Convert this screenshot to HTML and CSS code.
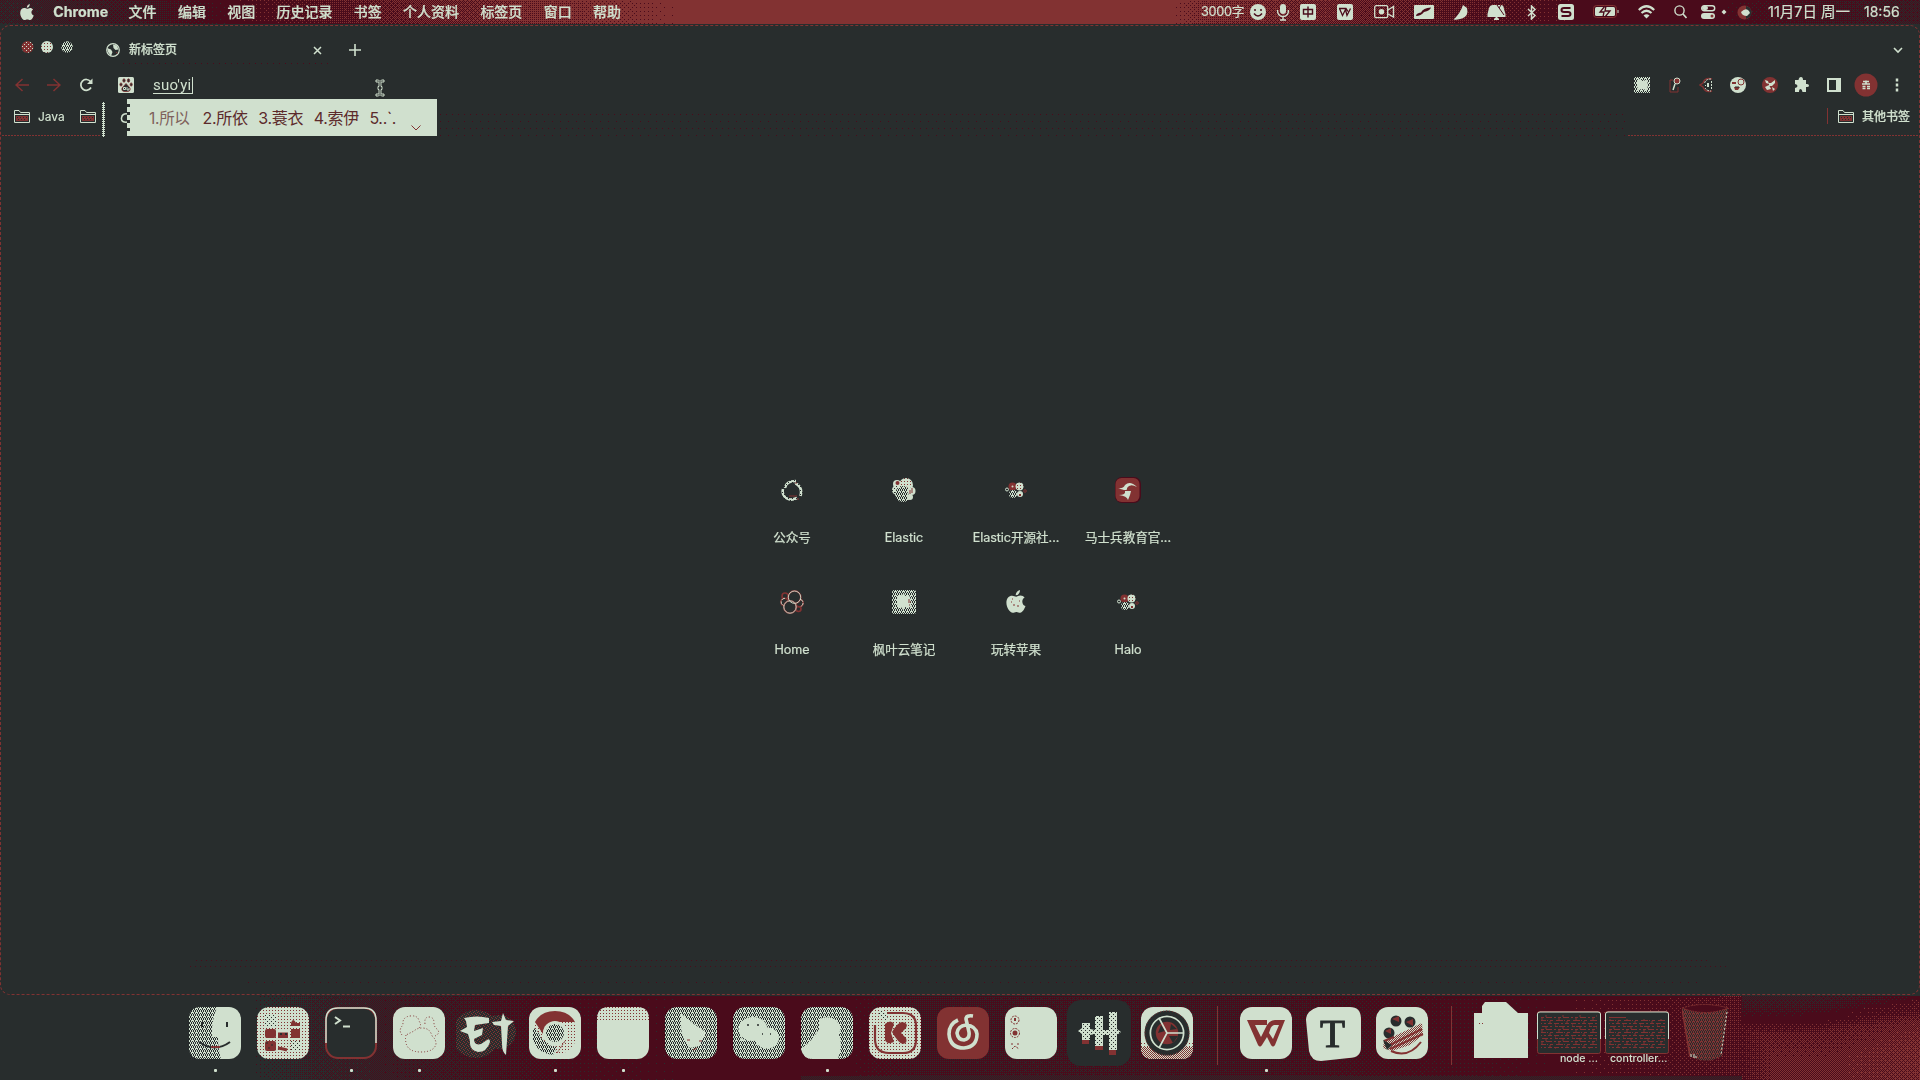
FILE: index.html
```html
<!DOCTYPE html>
<html lang="zh-CN">
<head>
<meta charset="utf-8">
<title>新标签页</title>
<link rel="stylesheet" href="styles.css">
</head>
<body>
<svg class="defs" width="0" height="0" aria-hidden="true">
  <defs>
    <pattern id="checker" width="4" height="4" patternUnits="userSpaceOnUse"><rect width="4" height="4" fill="#d0e0ce"/><path d="M0 0h1v1H0zM2 0h1v1H2zM1 1h1v1H1zM3 2h1v1H3zM1 2h1v1H1zM0 3h1v1H0zM2 3h1v1H2z" fill="#282d2d"/></pattern>
    <pattern id="dotsDark" width="4" height="4" patternUnits="userSpaceOnUse"><rect width="4" height="4" fill="#d0e0ce"/><path d="M0 0h1v1H0zM2 2h1v1H2z" fill="#282d2d"/></pattern>
    <pattern id="dotsRed" width="3" height="3" patternUnits="userSpaceOnUse"><rect width="3" height="3" fill="#d0e0ce"/><rect width="1" height="1" fill="#823232"/></pattern>
    <pattern id="redHalf" width="2" height="2" patternUnits="userSpaceOnUse"><rect width="2" height="2" fill="#d0e0ce"/><path d="M0 0h1v1H0zM1 1h1v1H1z" fill="#823232"/></pattern>
    <pattern id="redDark" width="4" height="4" patternUnits="userSpaceOnUse"><rect width="4" height="4" fill="#282d2d"/><path d="M0 0h1v1H0zM2 1h1v1H2zM1 2h1v1H1zM3 3h1v1H3z" fill="#823232"/></pattern>
    <pattern id="bin" width="4" height="4" patternUnits="userSpaceOnUse"><rect width="4" height="4" fill="#823232"/><path d="M0 0h1v1H0zM2 0h1v1H2zM1 1h1v1H1zM3 2h1v1H3zM1 2h1v1H1zM0 3h1v1H0zM2 3h1v1H2z" fill="#282d2d"/></pattern>
    <pattern id="redMost" width="4" height="4" patternUnits="userSpaceOnUse"><rect width="4" height="4" fill="#823232"/><path d="M0 0h1v1H0zM2 2h1v1H2z" fill="#d0e0ce"/></pattern>
    <pattern id="code" width="17" height="12" patternUnits="userSpaceOnUse"><path d="M0 .5h5M7 .5h2M11 .5h4M1 3.500h3M5 3.500h6M13 3.500h2M0 6.500h2M4 6.500h3M9 6.500h6M2 9.500h7M10 9.500h1M13 9.500h3M1 2h1M8 5h2M4 8h2M12 11h2" stroke="#823232"/></pattern>
    <symbol id="apple" viewBox="0 0 14 17"><path fill="currentColor" d="M9.800 0C9.900 2 8.400 3.900 6.800 3.800 6.700 2 8.200.3 9.800 0zM7.100 4.700c.8 0 1.700-.8 3-.8 1.300 0 2.300.6 3 1.500-2.500 1.600-2 5 .6 6-.7 2.200-2.200 4.700-3.700 4.700-1 0-1.500-.6-2.700-.6s-1.700.6-2.600.6C2.600 16.100.2 12.300.2 9c0-3.200 1.900-5 4-5 1.200 0 2.100.7 2.900.7z"/></symbol>
    <symbol id="folder" viewBox="0 0 16 14"><path d="M.5 13.500V1.500H5l1.500 2h9v10z" fill="#282d2d" stroke="#d0e0ce"/><path d="M1 5.500h14" stroke="#d0e0ce"/><path d="M2 7h12v5H2z" fill="#823232"/><path d="M3 8.500h10M4 10.500h8" stroke="#282d2d" stroke-dasharray="1 2"/></symbol>
    <symbol id="cluster" viewBox="0 0 22 16"><circle cx="7.500" cy="4.500" r="4" fill="#823232"/><circle cx="7.500" cy="4.500" r="1" fill="#d0e0ce"/><circle cx="14.500" cy="4.500" r="4" fill="url(#dotsRed)"/><circle cx="8" cy="12" r="4" fill="url(#checker)"/><circle cx="15" cy="12" r="3" fill="#d0e0ce"/><path d="M14 12h2v2h-2z" fill="#823232"/><circle cx="2" cy="7.500" r="1.500" fill="none" stroke="#d0e0ce"/><circle cx="20" cy="9" r="1.300" fill="none" stroke="#823232"/></symbol>
  </defs>
</svg>

<canvas class="wallpaper" id="wallpaper" width="1920" height="1080"></canvas>

<div class="desktop">
  <header class="menubar">
    <nav class="menus">
      <svg class="apple" width="14" height="17"><use href="#apple"/></svg>
      <b class="app">Chrome</b><span>文件</span><span>编辑</span><span>视图</span><span>历史记录</span><span>书签</span><span>个人资料</span><span>标签页</span><span>窗口</span><span>帮助</span>
    </nav>
    <div class="status">
      <span class="count">3000字</span>
      <svg width="16" height="16"><circle cx="8" cy="8" r="8" fill="#d0e0ce"/><path d="M5 5v2M11 5v2M4 9.500q4 5 8 0" fill="none" stroke="#4a0b1b" stroke-width="1.500"/></svg>
      <svg width="14" height="17"><rect x="4" y="0" width="6" height="10" rx="3" fill="#d0e0ce"/><path d="M1.500 6q0 6.500 5.500 6.500t5.500-6.500M7 12.500v3M4 16h6" fill="none" stroke="#d0e0ce" stroke-width="1.400"/></svg>
      <svg width="16" height="16"><rect width="16" height="16" rx="2" fill="#d0e0ce"/><path d="M3.500 5.500h9v4.500h-9zM8 2.500v11" fill="none" stroke="#4a0b1b" stroke-width="1.400"/></svg>
      <svg width="16" height="16"><rect width="16" height="16" rx="2" fill="#d0e0ce"/><path d="M2.500 4.500l3 7 3-6 1.500 6 3.500-7M5 4.500h4l2 3M2 4.500h3" fill="none" stroke="#4a0b1b" stroke-width="1.300"/></svg>
      <svg width="21" height="16"><rect x=".7" y="1.700" width="13" height="12" rx="1.500" fill="none" stroke="#d0e0ce" stroke-width="1.300"/><circle cx="7.500" cy="7.700" r="2.700" fill="#d0e0ce"/><path d="M14 6l5.500-3.500v10.500L14 10" fill="none" stroke="#d0e0ce" stroke-width="1.400"/></svg>
      <svg width="20" height="14"><rect width="20" height="14" rx="1" fill="#d0e0ce"/><path d="M2 11q0-3 5-3.500Q9 3 17 2.500q-1 3-7 4.500-3 4-8 4z" fill="#4a0b1b"/></svg>
      <svg width="16" height="15"><path d="M10 0l4 3q2 8-5 10.500-4 1.500-8.500 1Q7 9 10 0z" fill="#d0e0ce"/></svg>
      <svg width="19" height="17"><path d="M.5 13V10l1.500-6Q3 1 6 1h9q2 1 2 4l1.500 5v3z" fill="#d0e0ce"/><path d="M7 15l2.500-2.500L12 15v1H7z" fill="#d0e0ce"/><path d="M10 1l7 10M14 1l-2 3" stroke="#4a0b1b"/></svg>
      <svg width="10" height="15"><path d="M1 4l7 6.500L4.500 14V1L8 4.500 1 11" fill="none" stroke="#d0e0ce" stroke-width="1.500"/></svg>
      <svg width="16" height="16"><rect width="16" height="16" rx="2.500" fill="#d0e0ce"/><path d="M12.500 4H6Q3.500 4 3.500 6T6 8h4q2.500 0 2.500 2T10 12H3.500" fill="none" stroke="#4a0b1b" stroke-width="2"/></svg>
      <svg width="26" height="14"><rect x=".5" y=".5" width="23" height="12" rx="3" fill="none" stroke="#823232"/><rect x="2" y="2" width="20" height="9" rx="1.500" fill="#d0e0ce"/><path d="M12 1L7 7h4l-1 5M13 1l-1 5h5l-5 6" fill="none" stroke="#4a0b1b" stroke-width="1.300"/><path d="M25 5v3" stroke="#d0e0ce"/></svg>
      <svg width="17" height="14"><path d="M.8 5q7.700-7.500 15.400 0M3.500 8q5-4.500 10 0" fill="none" stroke="#d0e0ce" stroke-width="2.200"/><path d="M5.500 10.500q3-2.500 6 0l-3 3z" fill="#d0e0ce"/></svg>
      <svg width="13" height="14"><circle cx="5.500" cy="5.500" r="4.600" fill="none" stroke="#d0e0ce" stroke-width="1.400"/><path d="M9 9l3.500 4" stroke="#d0e0ce" stroke-width="1.600"/></svg>
      <svg width="15" height="14"><rect x=".7" y=".7" width="13" height="5" rx="2.500" fill="none" stroke="#d0e0ce" stroke-width="1.400"/><rect x="1" y="1" width="6" height="4" rx="2" fill="#d0e0ce"/><rect y="8" width="14" height="6" rx="3" fill="#d0e0ce"/><circle cx="11" cy="11" r="1.500" fill="#823232"/></svg>
      <svg width="6" height="6"><path d="M3 .5L5.500 3 3 5.500.5 3z" fill="#d0e0ce"/></svg>
      <svg width="15" height="15"><circle cx="7.500" cy="7.500" r="7" fill="#823232"/><path d="M9 1q5 1 5.500 6T9 14z" fill="#282d2d"/><path d="M4 7q5-5 8-1l1 2-3 3q-5 0-6-4z" fill="#d0e0ce"/></svg>
      <span class="date">11月7日 周一</span>
      <span class="clock">18:56</span>
    </div>
  </header>

  <main class="window">
    <div class="tabstrip">
      <svg class="lights" width="54" height="14"><circle cx="7.500" cy="7" r="6" fill="url(#redMost)"/><circle cx="27" cy="7" r="6" fill="url(#dotsRed)"/><circle cx="47" cy="7" r="5.800" fill="url(#checker)"/></svg>
      <div class="tab">
        <svg width="14" height="14"><circle cx="7" cy="7" r="6.300" fill="#282d2d" stroke="#d0e0ce" stroke-width="1.200"/><path d="M1 5l4 1.500 1.500 2.500L5 13l-3-4zM7 1.500l4 1 1.500 4-3 .5-2-2z" fill="#d0e0ce"/><path d="M10 9l1.500 1.500" stroke="#823232"/></svg>
        <span class="title">新标签页</span>
        <svg class="close" width="9" height="9"><path d="M1 1l7 7M8 1L1 8" stroke="#d0e0ce" stroke-width="1.500"/></svg>
      </div>
      <svg class="plus" width="12" height="12"><path d="M6 0v12M0 6h12" stroke="#d0e0ce" stroke-width="1.600"/></svg>
      <svg class="expand" width="10" height="7"><path d="M1 1l4 4 4-4" fill="none" stroke="#d0e0ce" stroke-width="1.600"/></svg>
    </div>

    <div class="toolbar">
      <div class="nav">
        <svg width="14" height="14"><path d="M14 7H1M7.500 1L1 7l6.500 6" fill="none" stroke="#823232" stroke-width="1.500"/></svg>
        <svg width="14" height="14"><path d="M0 7h13M6.500 1L13 7l-6.500 6" fill="none" stroke="#823232" stroke-width="1.500"/></svg>
        <svg width="14" height="14"><path d="M12 9.500A5.400 5.400 0 1 1 11.500 3.500" fill="none" stroke="#d0e0ce" stroke-width="1.700"/><path d="M13.500.5v5.500H8z" fill="#d0e0ce"/></svg>
      </div>
      <div class="address">
        <svg width="16" height="16"><rect width="16" height="16" rx="1.500" fill="#d0e0ce"/><g fill="#282d2d" stroke="#823232" stroke-width=".8"><ellipse cx="6" cy="3.500" rx="1.200" ry="1.700"/><ellipse cx="10.500" cy="3.500" rx="1.200" ry="1.700"/><ellipse cx="3" cy="7.500" rx="1.100" ry="1.600"/><ellipse cx="13.200" cy="7.500" rx="1.100" ry="1.600"/><path d="M8 6.500l4 4.500q1 4-4 3.500-5 .5-4-3.500z"/></g><path d="M5.500 10.500h2v2h-2zM9 10v3h2v-2" fill="none" stroke="#d0e0ce"/></svg>
        <span class="typed">suo'yi</span>
      </div>
      <svg class="ibeam" width="10" height="18"><path d="M1 1h2.500L5 2.500 6.500 1H9v2H6v4.500h1v3H6V15h3v2H6.500L5 15.500 3.500 17H1v-2h3v-4.500H3v-3h1V3H1z" fill="#282d2d" stroke="#d0e0ce"/></svg>
      <div class="extensions">
        <svg width="16" height="16"><rect width="16" height="16" fill="url(#checker)"/><path d="M3 3l3-1 2 2 5-1 1 5-1 5-5-1-4 1-1-5z" fill="#d0e0ce"/></svg>
        <svg width="12" height="16"><path d="M1 3v12h8v-5M1 3h3" fill="none" stroke="#823232"/><circle cx="8" cy="4" r="3" fill="#823232" stroke="#d0e0ce"/><path d="M6 7l-2 6" stroke="#d0e0ce" stroke-width="1.500"/></svg>
        <svg width="15" height="16"><path d="M13 2Q6 0 4 6l-3 2 3 2q2 6 9 4" fill="none" stroke="#823232" stroke-width="1.500"/><path d="M12 2Q6 2 5.500 7M6 11q2 3 6 3M12.500 4v8" fill="none" stroke="#d0e0ce" stroke-dasharray="2 1"/><path d="M8 6h2v4H8zM6 8h1v1H6z" fill="#d0e0ce"/></svg>
        <svg width="16" height="16"><circle cx="8" cy="8" r="8" fill="#d0e0ce"/><circle cx="11" cy="5" r="3" fill="none" stroke="#823232"/><path d="M2 5h4v2H2zM4 10h6l-2 3H5z" fill="#823232"/><path d="M5 10h4" stroke="#282d2d"/></svg>
        <svg width="16" height="16"><circle cx="8" cy="8" r="8" fill="#823232"/><path d="M3 3l3 1 1 3-3-1zM9 6l4-3v3l-3 3zM3 10l4-2 2 4-4 1zM10 10l3 2-2 2zM7 6h3v3H7z" fill="#d0e0ce"/></svg>
        <svg width="15" height="16"><path d="M1 3h3.500Q5 0 7 0t2 3h3v4q3-.5 3 1.500T12 10v5H8.500Q8 12 6.500 12T5 15H1v-4q2.500-.5 2.500-2T1 7z" fill="#d0e0ce"/></svg>
        <svg width="14" height="14"><rect width="14" height="14" fill="#d0e0ce"/><rect x="2" y="2" width="7" height="10" fill="#282d2d"/></svg>
        <svg width="24" height="24"><circle cx="12" cy="12" r="11.500" fill="#823232"/><path d="M9 8.500h6M8 11h8M8.500 13.500h3M13 13.500h3M8.500 15.500h3M13 15.500h3M12 7.500v4" fill="none" stroke="#d0e0ce" stroke-width="1.700"/></svg>
        <svg width="4" height="14"><path d="M2 .5v3M2 5.500v3M2 10.500v3" stroke="#d0e0ce" stroke-width="2.500"/></svg>
      </div>
    </div>

    <div class="bookmarks">
      <svg width="16" height="14"><use href="#folder"/></svg>
      <span class="java">Java</span>
      <svg width="16" height="14"><use href="#folder"/></svg>
      <i class="drag"></i>
      <svg class="ring" width="8" height="10"><path d="M8 1Q2 0 1.500 5T8 9" fill="none" stroke="#d0e0ce" stroke-width="1.500"/></svg>
      <div class="other">
        <svg width="16" height="14"><use href="#folder"/></svg>
        <span>其他书签</span>
      </div>
      <div class="ime">
        <span class="pick">1.所以</span><span>2.所依</span><span>3.蓑衣</span><span>4.索伊</span><span>5..`.</span>
        <svg width="10" height="6"><path d="M.5.5L5 5 9.500.5" fill="none" stroke="#823232"/></svg>
      </div>
    </div>

    <section class="shortcuts">
      <a><svg width="24" height="24"><g fill="none" stroke="url(#dotsDark)" stroke-width="2.600"><path d="M5 10Q6 3 16 3"/><path d="M15 5q8 4 5.500 13"/><path d="M17 20Q9 24 4 18 2 15 3 11"/></g><path d="M9 18h8M15 5h2M18 20v2" stroke="#823232"/></svg><span>公众号</span></a>
      <a><svg width="24" height="24"><circle cx="14" cy="7" r="7" fill="url(#dotsRed)"/><circle cx="5" cy="6" r="4" fill="#d0e0ce"/><circle cx="5.500" cy="5" r="2" fill="#823232"/><circle cx="5" cy="12" r="5" fill="url(#dotsDark)"/><circle cx="11" cy="16" r="8" fill="url(#checker)"/><circle cx="19.500" cy="13" r="4" fill="#d0e0ce"/><path d="M20 10v5M18 12v4" stroke="#823232"/><circle cx="18" cy="19" r="3" fill="#d0e0ce"/></svg><span>Elastic</span></a>
      <a><svg width="22" height="16"><use href="#cluster"/></svg><span>Elastic开源社...</span></a>
      <a><svg width="26" height="26"><rect width="26" height="26" rx="7" fill="#4a0b1b"/><rect x=".5" y="1" width="24" height="24" rx="6" fill="#823232"/><path d="M3 11q5 1 7-3 5-5 12 2-7-4-10 1 1 4-9 0zM4 18q7 0 6-4h6l-1 4-2 5q-1-4-9-5z" fill="#d0e0ce"/></svg><span>马士兵教育官...</span></a>
      <a><svg width="24" height="24"><g fill="#282d2d" stroke="#823232" stroke-width="1.600"><circle cx="5" cy="6" r="3"/><circle cx="18.500" cy="19" r="2.500"/><circle cx="4.500" cy="12" r="3.700"/><circle cx="19.500" cy="13" r="3.700"/><circle cx="14.500" cy="7.200" r="6.300"/><circle cx="10" cy="17" r="6.200"/></g><g fill="none" stroke="#d0e0ce" stroke-width=".9"><circle cx="14.500" cy="7.200" r="6.200"/><circle cx="10" cy="17" r="6.200"/><path d="M5 8.300a3.700 3.700 0 0 0-1 7.300M20 9.300a3.700 3.700 0 0 1 0 7.300" stroke-dasharray="4 1"/></g></svg><span>Home</span></a>
      <a><svg width="24" height="24"><rect width="24" height="24" rx="2" fill="url(#checker)"/><path d="M5 6l5-1 2-2 1 3 4-1 2 5-1 3 2 3-4 2-3-1-2 3-2-3-3 1-1-4z" fill="#d0e0ce"/><path d="M17 9v2M16 12h3M17 15h1" stroke="#823232"/></svg><span>枫叶云笔记</span></a>
      <a><svg width="20" height="24"><use href="#apple"/><path d="M6 9h1M7 15h2M11 16h2M13 11h1M5 12h1" stroke="#823232"/></svg><span>玩转苹果</span></a>
      <a><svg width="22" height="16"><use href="#cluster"/></svg><span>Halo</span></a>
    </section>
  </main>

  <footer class="dock">
    <div class="apps">
      <div class="item on"><svg width="52" height="52"><rect width="52" height="52" rx="12" fill="#d0e0ce"/><path d="M12 0h16q-6 15-5 30h6q0 12 3 22H12Q0 52 0 40V12Q0 0 12 0z" fill="url(#checker)"/><path d="M13 15v5M38 15v5" stroke="#282d2d" stroke-width="2"/><path d="M10 35q16 11 31 0" fill="none" stroke="#282d2d" stroke-width="2"/><path d="M22 40h9" stroke="#823232" stroke-width="2"/></svg></div>
      <div class="item"><svg width="52" height="52"><rect width="52" height="52" rx="12" fill="url(#dotsRed)"/><rect x="8" y="8" width="12" height="12" fill="url(#dotsDark)"/><rect x="21" y="8" width="12" height="10" fill="url(#dotsRed)"/><path d="M34 16q2-6 5 0h4v3h-9z" fill="#823232"/><rect x="8" y="22" width="11" height="9" rx="2" fill="#823232"/><path d="M21 25h10v6H21zM34 22h9v9h-9z" fill="#823232"/><path d="M21 24h10" stroke="#d0e0ce" stroke-width="3"/><path d="M23 27h2M28 27h2" stroke="#282d2d" stroke-width="2"/><rect x="8" y="34" width="11" height="10" rx="2" fill="#823232"/><path d="M9 36h2M14 38h2M11 41h2" stroke="#282d2d"/><path d="M21 41q6 1 9 2" stroke="#823232" stroke-width="3"/><rect x="34" y="34" width="10" height="9" fill="url(#dotsDark)"/></svg></div>
      <div class="item on"><svg width="52" height="52"><rect x="1" y="1" width="50" height="50" rx="12" fill="#282d2d" stroke="#823232" stroke-width="2"/><path d="M1 36V13Q1 1 13 1h26q12 0 12 12v23" fill="none" stroke="#d0e0ce" stroke-width="1.500"/><path d="M10 10l5 3.500-5 3.500M18 19.500h7" fill="none" stroke="#d0e0ce" stroke-width="2"/></svg></div>
      <div class="item on"><svg width="52" height="52"><rect width="52" height="52" rx="12" fill="#d0e0ce"/><g fill="none" stroke="#823232" stroke-dasharray="1 2"><path d="M13 28q-1 4 0 8 2 9 15 9t15-8q0-5-4-8-2-8-10-8-5 0-8 3-4 2-8 4z"/><path d="M9 28Q5 23 10 18q-1-8 7-9 8-1 9 5 3 4 0 7M32 17q-1-7 4-7t5 6q0 4 3 6 4 4-2 7"/></g></svg></div>
      <div class="item"><svg width="62" height="54"><circle cx="20" cy="28" r="24" fill="url(#redDark)"/><circle cx="43" cy="26" r="17" fill="url(#redDark)"/><path d="M8 12q13-3 25 0v5l-14 2-1 6 9-3-1 7-8 4q0 7 7 5l6-4q3-2 3 2-3 10-12 10-9-2-8-11l-2-7-8-3 7-4-1-6zM36 16l9-1 2-8 3 7 8 1-6 5-2 29q-4-3-4-11l-1-18-7-1z" fill="#d0e0ce"/></svg></div>
      <div class="item on"><svg width="52" height="52"><rect width="52" height="52" rx="12" fill="#d0e0ce"/><circle cx="26" cy="26" r="22" fill="url(#dotsRed)"/><path d="M4 21q4 0 8 10l10 8 6 1-4 8Q8 46 4 33z" fill="url(#checker)"/><path d="M6 15Q12 4 26 4t20 11H26q-12 2-12 12z" fill="#823232"/><circle cx="26" cy="26" r="12" fill="#d0e0ce"/><circle cx="26" cy="26" r="9" fill="url(#checker)"/><path d="M28 46l8-12" stroke="#823232" stroke-dasharray="2 1"/></svg></div>
      <div class="item on"><svg width="52" height="52"><rect width="52" height="52" rx="12" fill="#d0e0ce"/><path d="M0 14V12Q0 0 12 0h28q12 0 12 12v2z" fill="url(#dotsRed)"/></svg></div>
      <div class="item"><svg width="52" height="52"><rect width="52" height="52" rx="12" fill="url(#checker)"/><path d="M16 6q10 10 22 17 4 3 1 7l-5 9-9 2q-9-10-9-22z" fill="#d0e0ce"/><path d="M22 33h3M34 34h3M28 43l4-2" stroke="#823232"/></svg></div>
      <div class="item"><svg width="52" height="52"><rect width="52" height="52" rx="12" fill="url(#checker)"/><ellipse cx="20" cy="22" rx="14.500" ry="12" fill="#d0e0ce"/><ellipse cx="34" cy="31" rx="12" ry="10.500" fill="#d0e0ce"/><path d="M8 31v3h6z" fill="#d0e0ce"/><path d="M14 18h2M24 18h2M29 27h1M37 27h1" stroke="#282d2d" stroke-width="1.500"/></svg></div>
      <div class="item on"><svg width="52" height="52"><rect width="52" height="52" rx="12" fill="url(#checker)"/><path d="M18 12q10-4 17 1l5 7-2 8q4 10-1 24H12Q2 52 0 42q12-9 18-20z" fill="#d0e0ce"/></svg></div>
      <div class="item"><svg width="52" height="52"><rect width="52" height="52" rx="12" fill="url(#dotsRed)"/><path d="M18 6h16q13 0 13 13v14q0 13-13 13H20Q6 46 6 32V18" fill="none" stroke="#823232" stroke-width="2.200"/><path d="M16 17q6-5 9 0l-3 9 3 9q-7 3-9-2zM23 25q6-10 10-10 7 1 4 6l-5 5 5 5q2 5-3 6-4 0-11-12z" fill="#823232"/><path d="M11 4l7 10" stroke="url(#dotsDark)" stroke-width="5"/></svg></div>
      <div class="item"><svg width="52" height="52"><rect width="52" height="52" rx="12" fill="#823232"/><path d="M21 13q-9 4-9 14 1 14 15 14 13-1 13-14-1-8-11-9-8 1-9 8 1 7 7 7 6-1 5-8l-3-13q0-4 7-3" fill="none" stroke="#d0e0ce" stroke-width="3.600"/></svg></div>
      <div class="item"><svg width="52" height="52"><rect width="52" height="52" rx="12" fill="#d0e0ce"/><g fill="none" stroke="#823232" stroke-dasharray="2 1"><circle cx="10" cy="13" r="4"/><circle cx="10" cy="26" r="4.500"/><path d="M7 36v2M13 36v2M7 42l3-3 4 3"/></g><circle cx="10" cy="26" r="2.500" fill="#823232"/><path d="M10 11v3" stroke="#823232" stroke-width="2"/></svg></div>
      <div class="item"><svg width="64" height="66"><rect width="64" height="66" rx="14" fill="#282d2d"/><path d="M15 40h7v4h-7zM28 46h8v4h-8zM42 50h7v5h-7z" fill="#823232"/><path d="M15 23h8v6l5 1V16h8v14h6V12h8v17l4 3-4 3v15h-8V35h-6v11h-8V34l-5 1v5h-8v-6l-4-3 4-3z" fill="url(#dotsDark)"/></svg></div>
      <div class="item"><svg width="52" height="52"><rect width="52" height="52" rx="12" fill="#d0e0ce"/><path d="M0 35h52v5q0 12-12 12H12Q0 52 0 40z" fill="url(#dotsRed)"/><path d="M0 40h52q0 12-12 12H12Q0 52 0 40z" fill="url(#redHalf)"/><circle cx="26" cy="26" r="20" fill="#d0e0ce" stroke="#282d2d" stroke-width="5"/><circle cx="26" cy="26" r="22" fill="none" stroke="#823232" stroke-dasharray="1 2"/><circle cx="26" cy="26" r="13.500" fill="#823232" stroke="#282d2d" stroke-width="4.500"/><path d="M20 18l4 6-7 2zM30 17l6 5-7 1zM28 29h9l-5 7z" fill="#282d2d"/><path d="M26 26h16M26 26l-8-15M26 26l-8 15" stroke="#d0e0ce" stroke-width="1.600"/></svg></div>
    </div>
    <i class="divider"></i>
    <div class="apps recent">
      <div class="item on"><svg width="52" height="52"><rect width="52" height="52" rx="12" fill="#d0e0ce"/><path d="M7 13h20v5H15l6 12 6-12q3-5 8-5h10L35 38q-2 3-4 0l-4-8-5 8q-2 3-4 0zM34 18q-3 1-4 5l-1 3 4 6 6-14z" fill="#823232" fill-rule="evenodd"/></svg></div>
      <div class="item tilted"><svg width="56" height="56"><path d="M13 2h32q11 0 11 12v28q0 11-12 11l-28 3q-10 0-12-10L1 15Q1 6 13 2z" fill="#d0e0ce"/></svg><span class="serif">T</span></div>
      <div class="item"><svg width="52" height="52"><rect width="52" height="52" rx="12" fill="#d0e0ce"/><g fill="#282d2d"><circle cx="20" cy="14" r="5.500"/><circle cx="34" cy="15" r="5.500"/><circle cx="13" cy="26" r="5.500"/></g><path d="M16 12l7-3v6zM30 15l7-3v7zM9 24l6-3v6z" fill="#823232"/><path d="M8 34l38-18 1 12-13 10-18 6-9-3z" fill="url(#redHalf)"/><path d="M8 34l10-4M12 39l34-17M14 42l33-15M15 44q17 8 30-9" fill="none" stroke="#823232" stroke-width="2"/><path d="M7 33l9 5-5 5z" fill="#282d2d"/></svg></div>
    </div>
    <i class="divider second"></i>
    <div class="files">
      <svg width="54" height="56"><path d="M0 11h8V4l3-4h21l12 11h10v45H0z" fill="#d0e0ce"/><path d="M5 21.500h1M8 21.500h1" stroke="#823232"/></svg>
      <div class="thumb"><svg width="64" height="44"><rect x=".5" y=".5" width="63" height="42" rx="2" fill="#282d2d" stroke="#823232"/><path d="M.5 28V3Q.5 1 3 1h58q2.500 0 2.500 2v25" fill="none" stroke="#d0e0ce"/><rect x="4" y="4" width="56" height="34" fill="url(#code)"/></svg><span>node ...</span></div>
      <div class="thumb wide"><svg width="64" height="44"><rect x=".5" y=".5" width="63" height="42" rx="2" fill="#282d2d" stroke="#823232"/><path d="M.5 28V3Q.5 1 3 1h58q2.500 0 2.500 2v25" fill="none" stroke="#d0e0ce"/><rect x="4" y="8" width="56" height="30" fill="url(#code)"/><path d="M4 6.500h17" stroke="#823232"/></svg><span>controller...</span></div>
      <svg class="trash" width="46" height="57"><path d="M0 4q22-7 46 0l-6 48q-16 9-33 0z" fill="url(#bin)"/><path d="M0 4q22-7 46 0-22 9-46 0z" fill="#4a0b1b" stroke="#823232" stroke-dasharray="2 1"/><path d="M45 8l-6 43" stroke="#d0e0ce" stroke-dasharray="2 2"/><path d="M0 5l8 47" stroke="#823232" stroke-width="1.500"/><path d="M9 50v3M12 50v4M14 52v2" stroke="#d0e0ce"/></svg>
    </div>
  </footer>
</div>
<script src="wallpaper.js"></script>
</body>
</html>
```

FILE: styles.css
```css
:root {
  --ink: #282d2d;
  --wine: #4a0b1b;
  --red: #823232;
  --pale: #d0e0ce;
}

* { box-sizing: border-box; }

body {
  margin: 0;
  width: 1920px;
  height: 1080px;
  overflow: hidden;
  display: grid;
  background: var(--ink);
  color: var(--pale);
  font-family: Inter, "Noto Sans CJK SC", sans-serif;
}

svg { display: block; flex: none; }
.defs { position: absolute; }
.wallpaper, .desktop { grid-area: 1 / 1; }
.desktop {
  display: grid;
  grid-template-rows: 25px 970px 85px;
  width: 1920px;
  height: 1080px;
  z-index: 1;
}

.menubar {
  display: flex;
  justify-content: space-between;
  height: 24px;
  line-height: 23px;
  white-space: nowrap;
}
.menus {
  display: flex;
  align-items: center;
  gap: 21.300px;
  padding-left: 20px;
  font-size: 14px;
  font-weight: 500;
  -webkit-text-stroke: .2px var(--pale);
}
.menus span, .menus .app { margin-bottom: 1px; }
.menus .app { font-size: 14.200px; font-weight: 700; width: 54px; margin-left: -2px; }
.status {
  display: grid;
  grid-template-columns: 49px 26px 24px 37px 37px 40px 39px 34px 40px 31px 35px 45px 36px 27px 20px 16px 31px 96px 56px;
  align-items: center;
  width: 719px;
  font-size: 14px;
}
.status span { margin-bottom: 1px; }
.status .count { font-size: 12.700px; letter-spacing: -.300px; -webkit-text-stroke: .2px var(--pale); }
.status .date { font-size: 14.500px; -webkit-text-stroke: .2px var(--pale); }
.status .clock { -webkit-text-stroke: .2px var(--pale); }

.window {
  border: 1px dashed var(--red);
  border-radius: 10px;
  display: flex;
  flex-direction: column;
}

.tabstrip { display: flex; align-items: center; height: 44px; padding: 4px 22px 0 19px; }
.lights { margin-bottom: 7px; }
.tab { display: flex; align-items: center; width: 216px; margin-left: 32px; }
.tab .title { margin-left: 9px; font-size: 12px; font-weight: 500; line-height: 16px; margin-bottom: 1px; -webkit-text-stroke: .2px var(--pale); }
.tab .close { margin-left: auto; }
.plus { margin-left: 27px; }
.expand { margin-left: auto; margin-right: -6px; }

.toolbar { display: flex; align-items: center; height: 30px; }
.nav { display: flex; gap: 18px; padding-left: 14px; }
.address { display: flex; align-items: center; margin-left: 25px; gap: 19px; }
.typed {
  width: 40px;
  height: 17px;
  font: 15px/17px Roboto, sans-serif;
  letter-spacing: .25px;
  white-space: nowrap;
  border-right: 1px solid var(--pale);
  border-bottom: 1px solid var(--pale);
}
.ibeam { margin: 5px 0 0 182px; }
.extensions {
  display: grid;
  grid-template-columns: 35px 30px 31px 32px 32px 33px 27px 41px 24px;
  align-items: center;
  width: 285px;
  margin-left: auto;
}

.bookmarks { position: relative; display: flex; align-items: center; height: 36px; padding: 0 9px 4px 13px; font-size: 12px; font-weight: 500; }
.bookmarks .java { width: 26px; margin: 2px 16px 0 8px; font-size: 11.800px; }
.bookmarks .drag {
  width: 3px;
  height: 35px;
  margin: 6px 0 0 6px;
  flex: none;
  background: repeating-conic-gradient(var(--pale) 0 75%, var(--ink) 0 100%) 0 0 / 2px 2px;
}
.bookmarks .ring { margin: 4px 0 0 15px; }
.bookmarks .other {
  display: flex;
  align-items: center;
  gap: 8px;
  height: 16px;
  margin-left: auto;
  padding-left: 10px;
  border-left: 1px solid var(--red);
  white-space: nowrap;
  -webkit-text-stroke: .2px var(--pale);
}
.bookmarks .other span { margin-bottom: 1px; }
/* The input method's candidate bar floats over the bookmarks. */
.ime {
  position: absolute;
  left: 128px;
  top: -1px;
  display: flex;
  align-items: center;
  width: 308px;
  height: 37px;
  padding: 2px 0 0 20px;
  gap: 12.600px;
  background: var(--pale);
  color: #5c2a2b;
  font-size: 16px;
  font-weight: 400;
  line-height: 35px;
  white-space: nowrap;
}
.ime::before {
  content: "";
  position: absolute;
  left: -2px;
  top: 0;
  bottom: 0;
  width: 3px;
  background: repeating-linear-gradient(var(--pale) 0 5px, var(--ink) 5px 8px);
}
.ime span { width: 43px; letter-spacing: -.300px; }
.ime .pick { width: 41px; opacity: .7; font-size: 15.500px; }
.ime span:nth-of-type(5) { width: 30px; }
.ime svg { margin: 18px 0 0 -1px; }

.shortcuts {
  display: grid;
  grid-template-columns: repeat(4, 112px);
  grid-auto-rows: 112px;
  margin: 316px 0 0 735px;
}
.shortcuts a { display: grid; grid-template-rows: 76px 20px; justify-items: center; align-items: center; }
.shortcuts a > svg { margin-bottom: 1px; }
.shortcuts span { font-size: 12.600px; line-height: 20px; white-space: nowrap; letter-spacing: -.05px; -webkit-text-stroke: .2px var(--pale); }

.dock { display: flex; align-items: flex-start; padding: 4px 0 0 181px; }
.apps { display: grid; grid-template-columns: repeat(15, 68px); }
.recent { grid-template-columns: repeat(3, 68px); margin-left: 14px; }
.item {
  position: relative;
  display: grid;
  place-items: center;
  height: 68px;
}
.item.on::after {
  content: "";
  position: absolute;
  left: 33px;
  bottom: -5px;
  width: 3px;
  height: 3px;
  border-radius: 1px;
  background: var(--pale);
}
.item > * { grid-area: 1 / 1; }
.tilted { margin-left: -3px; }
.serif { font: 41px/52px "Liberation Serif", serif; color: var(--ink); -webkit-text-stroke: 1px var(--ink); }
.divider { width: 1px; height: 59px; margin: 7px 0 0 16px; background: var(--red); }
.divider.second { margin-left: 15px; }
.files { display: flex; padding-left: 22px; }
.files > svg:first-child { margin-top: 3px; }
.thumb { width: 64px; margin: 12px 0 0 9px; font-size: 10.600px; font-weight: 500; }
.thumb + .thumb { margin-left: 4px; }
.thumb span { display: block; margin: -3px 0 0 23px; line-height: 13px; white-space: nowrap; }
.thumb.wide span { margin-left: 5px; }
.trash { margin: 5px 0 0 13px; }
```

FILE: wallpaper.js
```js
// Four-colour wallpaper, shaded with an 8x8 ordered dither.
const ctx = document.getElementById('wallpaper').getContext('2d');
const palette = [[40, 45, 45], [74, 11, 27], [130, 50, 50]];
const image = ctx.createImageData(1920, 1080);

function threshold(x, y) {
  let v = 0;
  for (let bit = 0; bit < 3; bit++) {
    const a = (x >> bit) & 1, b = (y >> bit) & 1;
    v = v * 4 + ((a ^ b) * 2 + b);
  }
  return (v + 0.5) / 64;
}

function ramp(stops, x) {
  for (let i = 1; i < stops.length; i++) {
    if (x <= stops[i][0]) {
      const [x0, v0] = stops[i - 1], [x1, v1] = stops[i];
      return v0 + (v1 - v0) * (x - x0) / (x1 - x0);
    }
  }
  return stops[stops.length - 1][1];
}

const menu = [[0, .4], [130, .65], [230, 1], [300, 1.15], [430, 1.5], [540, 1.75], [680, 2], [1170, 2], [1210, 1.75], [1350, 1.5], [1450, 1.25], [1580, 1], [1720, 1], [1820, .75], [1920, .55]];
const dock = [[0, 0], [250, 0], [330, .4], [450, .65], [570, .95], [700, 1], [850, 1], [920, .75], [1100, .7], [1260, .75], [1400, .9], [1560, 1], [1660, 1.08], [1740, 1.2]];
const corner = [[996, .5], [1010, .8], [1016, 1], [1022, 1], [1034, 1.35], [1060, 1.5], [1080, 1.5]];
const cornerCap = [[1741, 1.15], [1775, 1.5], [1860, 1.65], [1920, 1.75]];

function level(x, y) {
  if (y < 24) return ramp(menu, x);
  if (y < 996) return 0;
  if (x > 1741) return Math.min(ramp(cornerCap, x), ramp(corner, y + Math.max(0, x - 1800) / 9) + Math.max(0, x - 1840) / 500);
  if (y > 1075 && x > 800) return .5;
  if (x > 540 && x < 1720 && y === 996) return 1;
  return ramp(dock, x);
}

for (let y = 0; y < 1080; y++) {
  for (let x = 0; x < 1920; x++) {
    const l = level(x, y);
    const c = palette[Math.min(2, Math.floor(l) + (l % 1 > threshold(x, y) ? 1 : 0))];
    image.data.set([c[0], c[1], c[2], 255], (y * 1920 + x) * 4);
  }
}
ctx.putImageData(image, 0, 0);

// Faint dotted shadow contours inside the window.
ctx.fillStyle = '#4a0b1b';
[[63, 123, 328, 6], [114, 440, 1625, 6], [121, 440, 1625, 8], [128, 440, 1625, 6], [135, 440, 1625, 8], [960, 196, 1710, 5], [966, 190, 1730, 5], [982, 248, 1700, 8]]
  .forEach(([y, from, to, step]) => { for (let x = from; x < to; x += step) ctx.fillRect(x, y, 1, 1); });

// Hairline under the bookmarks bar.
ctx.fillStyle = '#823232';
[[2, 100], [1628, 1918]].forEach(([from, to]) => { for (let x = from; x < to; x += 3) ctx.fillRect(x, 135, 2, 1); });
```
